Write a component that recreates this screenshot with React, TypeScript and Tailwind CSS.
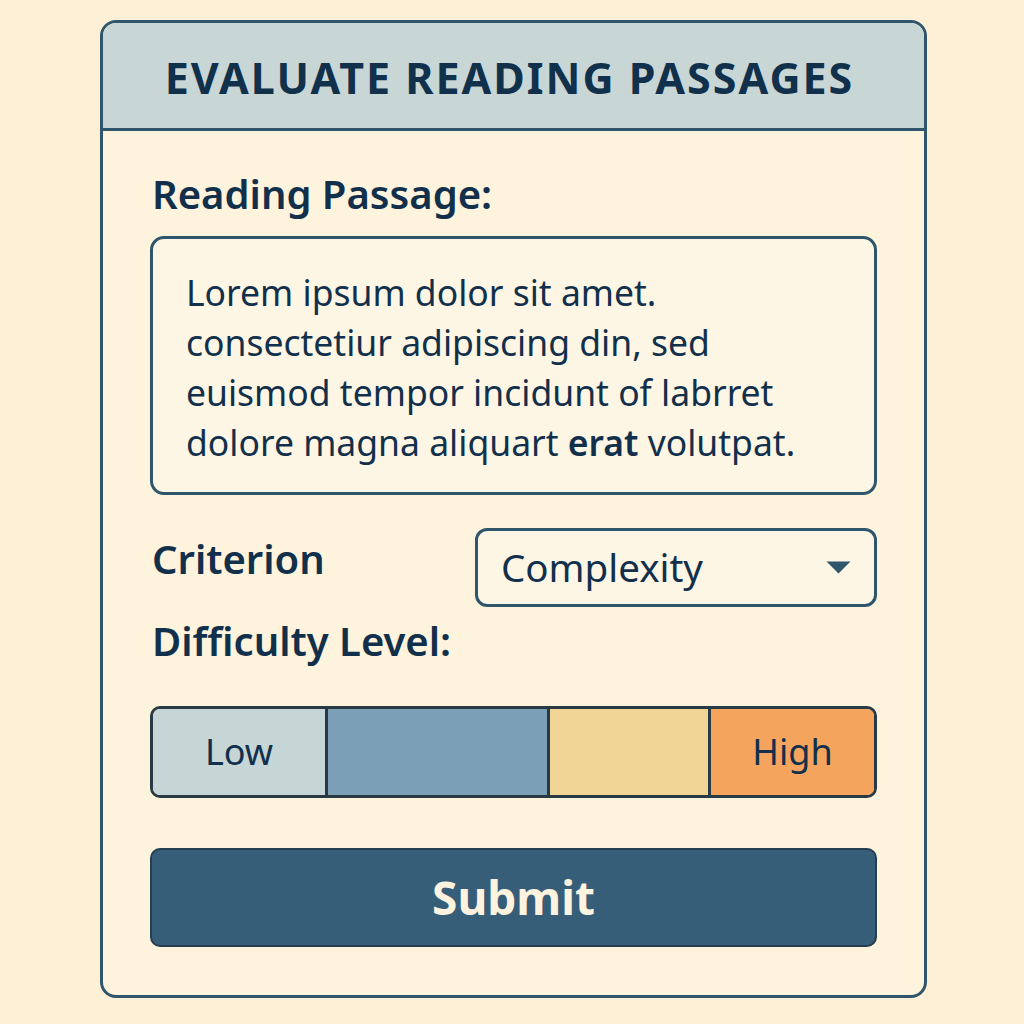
import { useState } from 'react';

// Difficulty scale segments, left to right
const levels = [
  { key: 'low', label: 'Low', width: 'w-[172px]', bg: 'bg-[#c6d5d6]' },
  { key: 'mid-low', label: '', width: 'w-[222px]', bg: 'bg-[#7c9fb8]' },
  { key: 'mid-high', label: '', width: 'w-[161px]', bg: 'bg-[#f0d596]' },
  { key: 'high', label: 'High', width: 'flex-1', bg: 'bg-[#f4a45d]' },
];

export default function App() {
  const [criterion] = useState('Complexity');

  return (
    <main className="min-h-screen w-full bg-[#fdf0d7] pt-5 font-['Noto_Sans',sans-serif] text-[#12304b]">
      <div className="ml-[100px] w-[827px] h-[978px] rounded-2xl border-[3px] border-[#2f566c] bg-[#fef3dc] overflow-hidden flex flex-col">
        {/* Header */}
        <div className="h-[108px] shrink-0 bg-[#c8d6d6] border-b-[3px] border-[#2f566c] flex items-center justify-center">
          <h1 className="mr-[8px] text-[43px] font-bold tracking-[2px] text-[#10304b] leading-none pt-1">
            EVALUATE READING PASSAGES
          </h1>
        </div>

        <div className="flex flex-col px-[47px] pt-[43px]">
          <label className="text-[40px] font-semibold leading-none ml-[2px]">Reading Passage:</label>

          {/* Passage */}
          <div className="mt-[22px] h-[259px] rounded-[14px] border-[3px] border-[#2f566c] bg-[#fef6e5] pl-[33px] pt-[28px]">
            <p className="text-[35.5px] leading-[50px] text-[#12304b]">
              Lorem ipsum dolor sit amet.
              <br />
              consectetiur adipiscing din, sed
              <br />
              euismod tempor incidunt of labrret
              <br />
              dolore magna aliquart <span className="font-semibold">erat</span> volutpat.
            </p>
          </div>

          {/* Criterion */}
          <div className="mt-[33px] flex items-start justify-between">
            <span className="mt-[11px] text-[40px] font-semibold leading-none ml-[2px]">Criterion</span>
            <button className="w-[402px] h-[79px] rounded-[12px] border-[3px] border-[#2f566c] bg-[#fef6e5] flex items-center justify-between pl-[23px] pr-[23px]">
              <span className="text-[38.5px] leading-none">{criterion}</span>
              <svg width="25" height="13" viewBox="0 0 25 13">
                <path d="M0.5 0.5 L24.5 0.5 L12.5 12.5 Z" fill="#2f566c" />
              </svg>
            </button>
          </div>

          <label className="mt-[14px] text-[40px] font-semibold leading-none ml-[2px]">Difficulty Level:</label>

          {/* Difficulty scale */}
          <div className="mt-[45px] h-[92px] rounded-[10px] border-[3px] border-[#2a3a44] overflow-hidden flex">
            {levels.map((lvl, i) => (
              <div
                key={lvl.key}
                className={`${lvl.width} ${lvl.bg} ${i > 0 ? 'border-l-[3px] border-[#2a3a44]' : ''} flex items-center justify-center text-[36px]`}
              >
                {lvl.label}
              </div>
            ))}
          </div>

          <button className="mt-[50px] h-[99px] rounded-[10px] border-2 border-[#263f50] bg-[#375e79] text-[46px] font-bold text-[#fdf3de]">
            Submit
          </button>
        </div>
      </div>
    </main>
  );
}
